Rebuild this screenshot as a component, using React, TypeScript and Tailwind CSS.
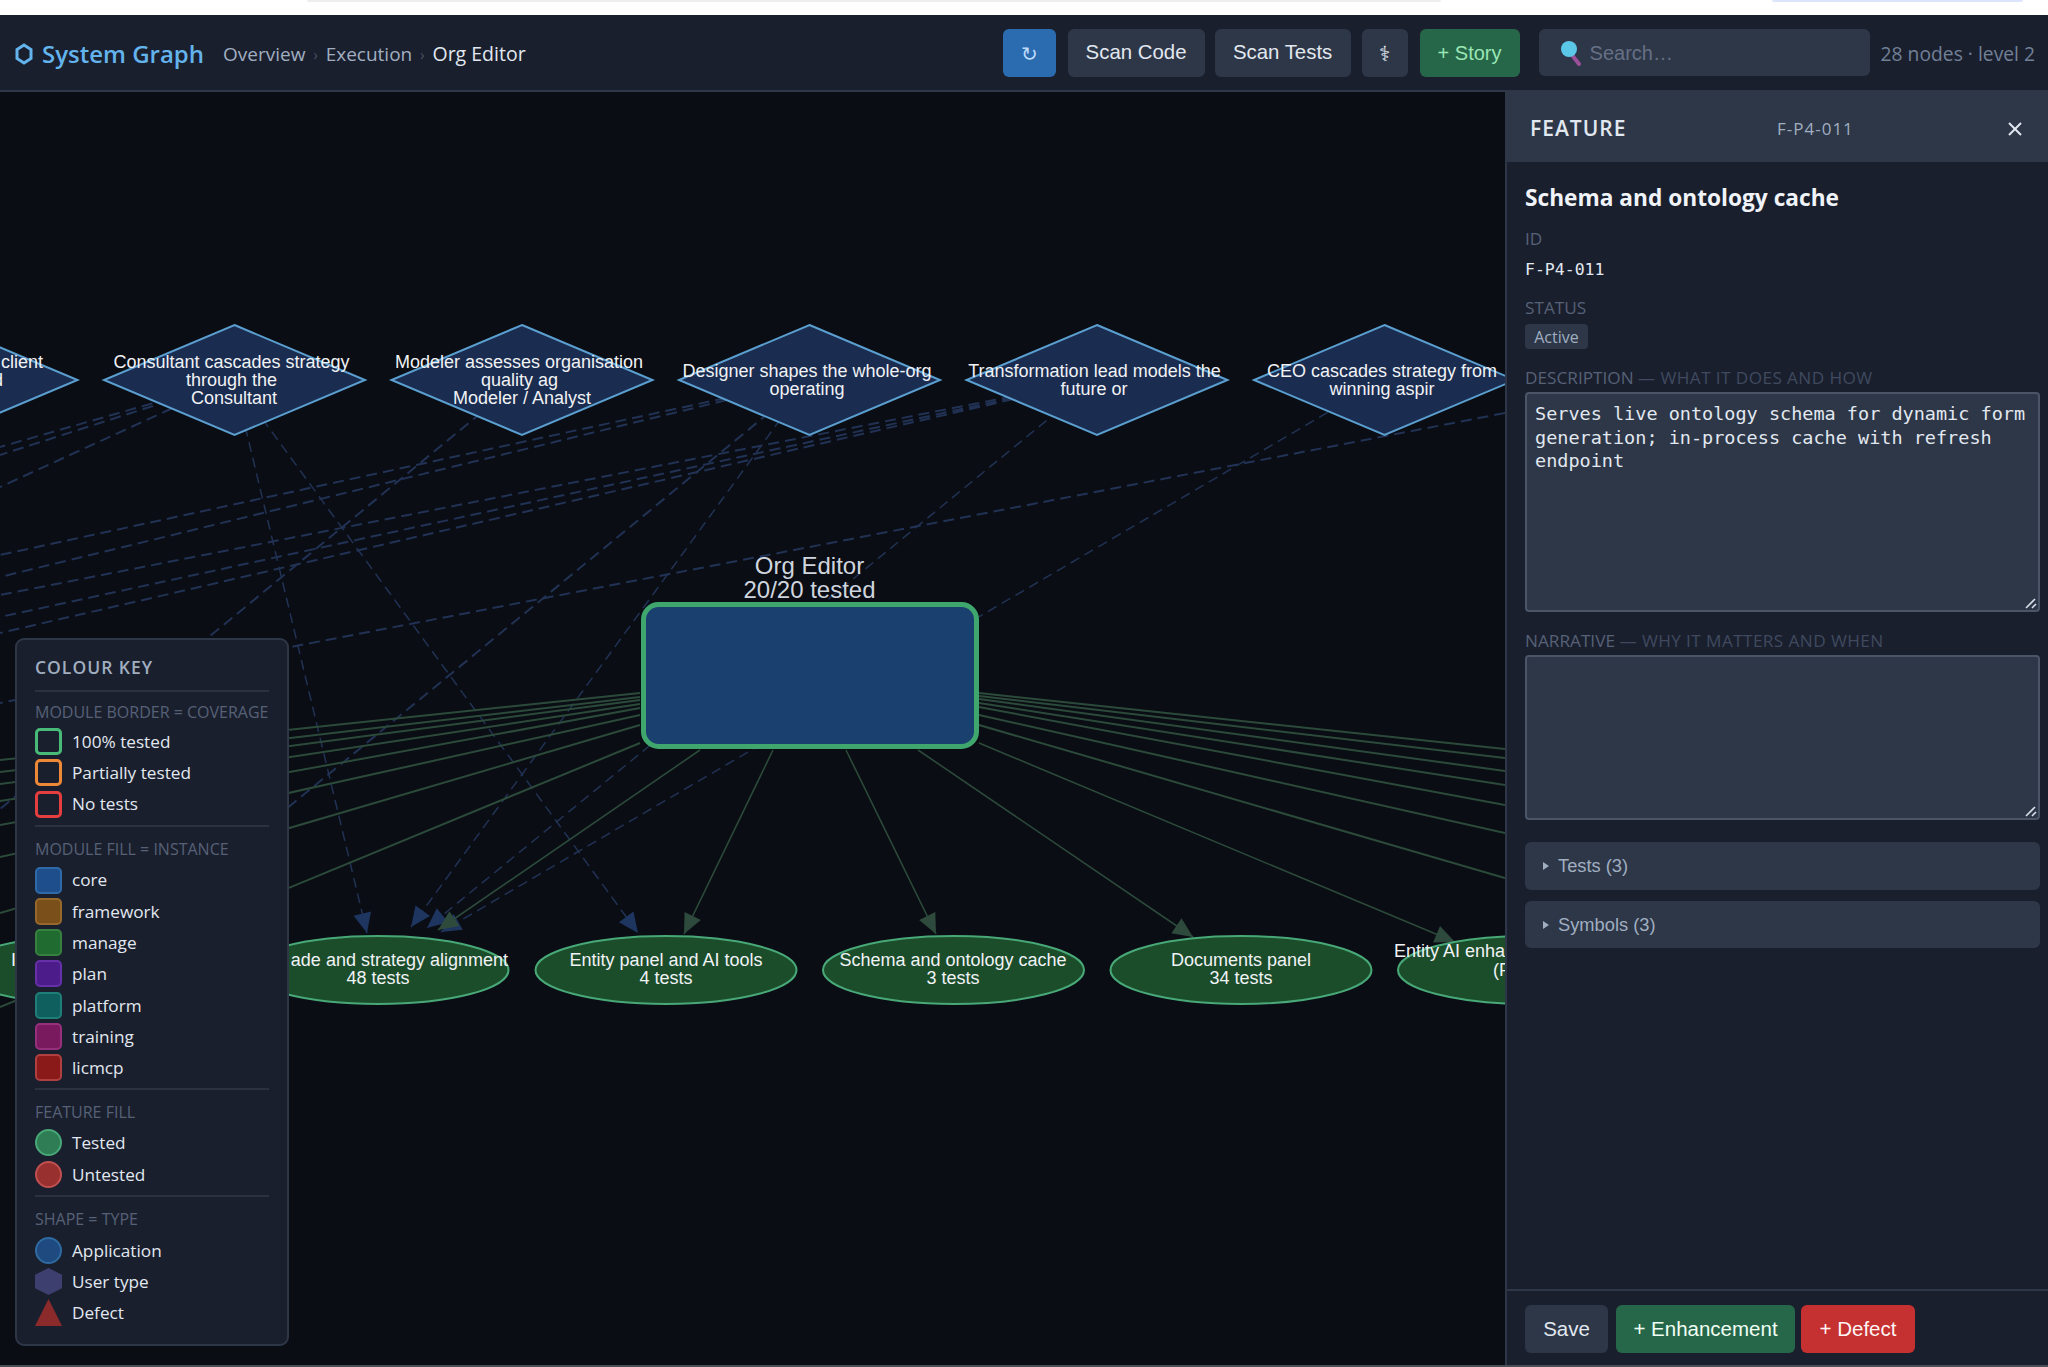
const GREEN = "#2c4a3a";
const BLUE = "#213254";

const greenEdges: [number, number, number, number, boolean][] = [
  [640, 693, 0, 760, false],
  [640, 697, 0, 772, false],
  [640, 700, 0, 784, false],
  [640, 704, 0, 801, false],
  [640, 708, 0, 825, false],
  [640, 715, 0, 857, false],
  [640, 725, 0, 913, false],
  [640, 743, 0, 1007, false],
  [979, 693, 1505, 749, false],
  [979, 696, 1505, 758, false],
  [979, 699, 1505, 771, false],
  [979, 703, 1505, 785, false],
  [979, 707, 1505, 805, false],
  [979, 715, 1505, 833, false],
  [979, 725, 1505, 878, false],
  [979, 743, 1455, 942, true],
  [918, 750, 1193, 937, true],
  [846, 750, 936, 934, true],
  [773, 750, 684, 934, true],
  [700, 750, 438, 930, true],
];

const blueEdges: [number, number, number, number, boolean][] = [
  [234, 380, 367, 933, true],
  [234, 380, 638, 933, true],
  [234, 380, 0, 447, false],
  [234, 380, 0, 455, false],
  [234, 380, 0, 487, false],
  [521, 380, 0, 809, false],
  [809, 380, 0, 555, false],
  [809, 380, 0, 577, false],
  [809, 380, 411, 927, true],
  [809, 380, 90, 970, false],
  [1096, 380, 427, 928, true],
  [1096, 380, 0, 595, false],
  [1096, 380, 0, 617, false],
  [1096, 380, 0, 633, false],
  [1383, 380, 441, 932, true],
  [1505, 413, 0, 703, false],
];

function arrow(x1: number, y1: number, x2: number, y2: number) {
  const d = Math.hypot(x2 - x1, y2 - y1);
  const ux = (x2 - x1) / d;
  const uy = (y2 - y1) / d;
  const bx = x2 - ux * 20;
  const by = y2 - uy * 20;
  return `${x2},${y2} ${bx - uy * 9},${by + ux * 9} ${bx + uy * 9},${by - ux * 9}`;
}

const diamonds: { cx: number; lines: [string, number, number][] }[] = [
  { cx: -53, lines: [["client", 43, 362], ["d", 3, 380]] },
  {
    cx: 234.5,
    lines: [
      ["Consultant cascades strategy", 231.5, 362],
      ["through the", 231.5, 380],
      ["Consultant", 234, 398],
    ],
  },
  {
    cx: 522,
    lines: [
      ["Modeler assesses organisation", 519, 362],
      ["quality ag", 519.5, 380],
      ["Modeler / Analyst", 522, 398],
    ],
  },
  {
    cx: 809.5,
    lines: [
      ["Designer shapes the whole-org", 807, 371],
      ["operating", 807, 389],
    ],
  },
  {
    cx: 1097,
    lines: [
      ["Transformation lead models the", 1094.5, 371],
      ["future or", 1094, 389],
    ],
  },
  {
    cx: 1384.5,
    lines: [
      ["CEO cascades strategy from", 1382, 371],
      ["winning aspir", 1382, 389],
    ],
  },
];

const ellipses: { cx: number; lines: [string, number, number, "start" | "middle" | "end"][] }[] = [
  { cx: 90.5, lines: [["I", 11, 960, "start"]] },
  {
    cx: 378,
    lines: [
      ["ade and strategy alignment", 508, 960, "end"],
      ["48 tests", 378, 978, "middle"],
    ],
  },
  {
    cx: 666,
    lines: [
      ["Entity panel and AI tools", 666, 960, "middle"],
      ["4 tests", 666, 978, "middle"],
    ],
  },
  {
    cx: 953.5,
    lines: [
      ["Schema and ontology cache", 953, 960, "middle"],
      ["3 tests", 953, 978, "middle"],
    ],
  },
  {
    cx: 1241,
    lines: [
      ["Documents panel", 1241, 960, "middle"],
      ["34 tests", 1241, 978, "middle"],
    ],
  },
  {
    cx: 1528.5,
    lines: [
      ["Entity AI enhancement", 1394, 951, "start"],
      ["(F-P4)", 1493, 970, "start"],
    ],
  },
];

function Graph() {
  return (
    <svg
      width="1505"
      height="1273"
      viewBox="0 92 1505 1273"
      className="block"
      fontFamily="'Liberation Sans', Arial, sans-serif"
    >
      {blueEdges.map(([a, b, c, d, head], i) => (
        <g key={i}>
          <line
            x1={a}
            y1={b}
            x2={c}
            y2={d}
            stroke={BLUE}
            strokeWidth={head ? 1.5 : 2}
            strokeDasharray={head ? "10 6" : "11 6"}
          />
          {head && <polygon points={arrow(a, b, c, d)} fill="#1e3560" />}
        </g>
      ))}
      {greenEdges.map(([a, b, c, d, head], i) => (
        <g key={i}>
          <line x1={a} y1={b} x2={c} y2={d} stroke={GREEN} strokeWidth={head ? 1.6 : 2} />
          {head && <polygon points={arrow(a, b, c, d)} fill="#2e4a3c" />}
        </g>
      ))}
      {diamonds.map((n) => (
        <g key={n.cx}>
          <polygon
            points={`${n.cx},325 ${n.cx + 130.5},380 ${n.cx},435 ${n.cx - 130.5},380`}
            fill="#1a2c4f"
            stroke="#5b9fd0"
            strokeWidth="2"
          />
        </g>
      ))}
      {diamonds.map((n) =>
        n.lines.map(([t, x, y]) => (
          <text
            key={t}
            x={x}
            y={y + 6}
            fontSize="18"
            fill="#f0f2f5"
            textAnchor={n.cx < 0 ? "end" : "middle"}
          >
            {t}
          </text>
        )),
      )}
      <rect x="643.5" y="604.5" width="333" height="142" rx="15" fill="#1a4070" stroke="#3fa66e" strokeWidth="5" />
      <text x="809.5" y="574" fontSize="24" fill="#cfd5de" textAnchor="middle">
        Org Editor
      </text>
      <text x="809.5" y="598" fontSize="24" fill="#cfd5de" textAnchor="middle">
        20/20 tested
      </text>
      {ellipses.map((n) => (
        <ellipse key={n.cx} cx={n.cx} cy="970" rx="130.5" ry="34" fill="#1b4d2b" stroke="#48a878" strokeWidth="2" />
      ))}
      {ellipses.map((n) =>
        n.lines.map(([t, x, y, anchor]) => (
          <text key={t} x={x} y={y + 6} fontSize="18" fill="#f0f2f5" textAnchor={anchor}>
            {t}
          </text>
        )),
      )}
    </svg>
  );
}

function Swatch({ border, fill }: { border: string; fill: string }) {
  return <span className={`h-[27px] w-[27px] shrink-0 rounded-[5px] ${border} ${fill}`} />;
}

function LegendRow({ icon, label }: { icon: React.ReactNode; label: string }) {
  return (
    <div className="mb-[4.3px] flex h-[27px] items-center gap-[10px]">
      {icon}
      <span className="text-[17.2px] leading-none text-[#e2e8f0]">{label}</span>
    </div>
  );
}

function LegendHeading({ children, gap }: { children: React.ReactNode; gap: string }) {
  return <div className={`h-[20px] whitespace-nowrap text-[16px] leading-[20px] text-[#566176] ${gap}`}>{children}</div>;
}

function Divider() {
  return <div className="mb-[12px] mt-[7px] h-[2px] bg-[#2a3242]" />;
}

function Legend() {
  return (
    <div className="absolute left-[15px] top-[546px] h-[708px] w-[274px] rounded-[9px] border-2 border-[#2d3748] bg-[#1a1f2e] px-[18px] pt-[15px]">
      <div className="mb-[11px] text-[17.5px] font-semibold leading-[24px] tracking-[1px] text-[#a0aec0]">COLOUR KEY</div>
      <div className="mb-[10px] h-[2px] bg-[#2a3242]" />
      <LegendHeading gap="mb-[6px]">MODULE BORDER = COVERAGE</LegendHeading>
      <LegendRow label="100% tested" icon={<Swatch border="border-[3px] border-[#48bb78]" fill="bg-[#1a1f2e]" />} />
      <LegendRow label="Partially tested" icon={<Swatch border="border-[3px] border-[#ed8936]" fill="bg-[#1a1f2e]" />} />
      <LegendRow label="No tests" icon={<Swatch border="border-[3px] border-[#e53e3e]" fill="bg-[#1a1f2e]" />} />
      <Divider />
      <LegendHeading gap="mb-[8px]">MODULE FILL = INSTANCE</LegendHeading>
      <LegendRow label="core" icon={<Swatch border="border-2 border-[#2f6aa8]" fill="bg-[#1e4e8c]" />} />
      <LegendRow label="framework" icon={<Swatch border="border-2 border-[#96682c]" fill="bg-[#7b4f1a]" />} />
      <LegendRow label="manage" icon={<Swatch border="border-2 border-[#38803f]" fill="bg-[#1f6b30]" />} />
      <LegendRow label="plan" icon={<Swatch border="border-2 border-[#6530a8]" fill="bg-[#4c1d8a]" />} />
      <LegendRow label="platform" icon={<Swatch border="border-2 border-[#1f7f78]" fill="bg-[#0f5f5f]" />} />
      <LegendRow label="training" icon={<Swatch border="border-2 border-[#97307c]" fill="bg-[#7a1a5e]" />} />
      <LegendRow label="licmcp" icon={<Swatch border="border-2 border-[#b04040]" fill="bg-[#8a1a1a]" />} />
      <Divider />
      <LegendHeading gap="mb-[7px]">FEATURE FILL</LegendHeading>
      <LegendRow
        label="Tested"
        icon={<span className="h-[27px] w-[27px] shrink-0 rounded-full border-2 border-[#48a878] bg-[#2f7d55]" />}
      />
      <LegendRow
        label="Untested"
        icon={<span className="h-[27px] w-[27px] shrink-0 rounded-full border-2 border-[#c05050] bg-[#983030]" />}
      />
      <Divider />
      <LegendHeading gap="mb-[8px]">SHAPE = TYPE</LegendHeading>
      <LegendRow
        label="Application"
        icon={<span className="h-[27px] w-[27px] shrink-0 rounded-full border-2 border-[#2f6aa0] bg-[#1e4a80]" />}
      />
      <LegendRow
        label="User type"
        icon={
          <svg width="27" height="27" viewBox="0 0 27 27" className="shrink-0">
            <polygon points="13.5,0 27,6.75 27,20.25 13.5,27 0,20.25 0,6.75" fill="#3d3f6e" />
          </svg>
        }
      />
      <LegendRow
        label="Defect"
        icon={
          <svg width="27" height="27" viewBox="0 0 27 27" className="shrink-0">
            <polygon points="13.5,0 27,27 0,27" fill="#8b2a2a" />
          </svg>
        }
      />
    </div>
  );
}

function ToolButton({ className, children }: { className: string; children: React.ReactNode }) {
  return (
    <button className={`flex h-[48px] items-center justify-center rounded-[6px] font-['Liberation_Sans',sans-serif] ${className}`}>
      {children}
    </button>
  );
}

function Field({ label, hint }: { label: string; hint: string }) {
  return (
    <div className="whitespace-nowrap text-[17.2px] leading-[20px] text-[#566176]">
      {label} <span className="tracking-[0.4px] text-[#3f4a5e]">— {hint}</span>
    </div>
  );
}

function Disclosure({ label, className }: { label: string; className: string }) {
  return (
    <div className={`flex items-center rounded-[6px] bg-[#2d3748] pl-[18px] font-['Liberation_Sans',sans-serif] text-[18.3px] text-[#a0aec0] ${className}`}>
      <span className="mr-[9px] h-0 w-0 border-y-[4px] border-l-[6px] border-y-transparent border-l-[#a0aec0]" />
      {label}
    </div>
  );
}

function Grip() {
  return (
    <svg width="12" height="12" viewBox="0 0 12 12" className="pointer-events-none absolute bottom-[3px] right-[3px]" stroke="#d8dee8" strokeWidth="1.6" fill="none">
      <line x1="1" y1="11" x2="10" y2="2" />
      <line x1="7" y1="11" x2="11" y2="7" />
    </svg>
  );
}

export default function App() {
  return (
    <div className="flex h-[1367px] w-[2048px] flex-col overflow-hidden bg-white font-['Open_Sans',sans-serif]">
      <div className="flex h-[15px] shrink-0 items-start">
        <div className="ml-[307px] h-[2px] w-[1134px] rounded-b bg-[#eceef0]" />
        <div className="ml-[331px] h-[2px] w-[251px] rounded-b bg-[#dbe5fb]" />
      </div>

      <header className="flex h-[77px] shrink-0 items-center border-b-2 border-[#2d3748] bg-[#1a1f2e] pl-[15px] pr-[13px]">
        <div className="flex items-center pt-[3px]">
          <svg width="18" height="22" viewBox="0 0 18 22" className="mr-[9px]" fill="none" stroke="#63b3ed" strokeWidth="3">
            <polygon points="9,2 16,6.5 16,15.5 9,20 2,15.5 2,6.5" />
          </svg>
          <span className="text-[24px] font-semibold text-[#63b3ed]">System Graph</span>
          <nav className="ml-[19px] flex items-center text-[19px] text-[#a0aec0]">
            <span>Overview</span>
            <span className="mx-[8px] text-[14px] text-[#4a5568]">›</span>
            <span>Execution</span>
            <span className="mx-[8px] text-[14px] text-[#4a5568]">›</span>
            <span className="text-[19.5px] text-[#e2e8f0]">Org Editor</span>
          </nav>
        </div>
        <div className="ml-auto flex items-center">
          <ToolButton className="w-[53px] bg-[#2b6cb0] pt-[2px] font-['DejaVu_Sans',sans-serif] text-[20px] text-[#bfdbfe]">↻</ToolButton>
          <ToolButton className="ml-[12px] w-[137px] bg-[#2d3748] text-[20.4px] text-[#e2e8f0]">Scan Code</ToolButton>
          <ToolButton className="ml-[10px] w-[136px] bg-[#2d3748] text-[20.4px] text-[#e2e8f0]">Scan Tests</ToolButton>
          <ToolButton className="ml-[11px] w-[46px] bg-[#2d3748] pt-[3px] font-['DejaVu_Sans',sans-serif] text-[21px] text-[#e2e8f0]">⚕</ToolButton>
          <ToolButton className="ml-[12px] w-[100px] bg-[#276749] text-[20px] text-[#9ae6b4]">+ Story</ToolButton>
          <div className="ml-[19px] flex h-[47px] w-[331px] items-center rounded-[6px] bg-[#2d3748] pl-[21px] pt-[1px] font-['Liberation_Sans',sans-serif] text-[20px] text-[#667085]">
            <svg width="22" height="26" viewBox="0 0 22 26" className="mr-[8px]">
              <line x1="12" y1="15" x2="19" y2="24" stroke="#9b4f96" strokeWidth="4" strokeLinecap="round" />
              <circle cx="9" cy="9" r="8" fill="#5cc8e8" />
            </svg>
            Search…
          </div>
          <span className="ml-[11px] whitespace-nowrap pt-[3px] text-[19.3px] text-[#718096]">28 nodes · level 2</span>
        </div>
      </header>

      <main className="flex min-h-0 flex-1">
        <section className="relative w-[1505px] shrink-0 overflow-hidden bg-[#0a0d14]">
          <Graph />
          <Legend />
        </section>

        <aside className="-mt-[2px] flex w-[543px] shrink-0 flex-col border-l-2 border-[#2d3748] bg-[#1a1f2e]">
          <div className="flex h-[72px] shrink-0 items-center bg-[#2d3748] pl-[23px] pr-[25px] pt-[5px]">
            <span className="w-[94px] whitespace-nowrap text-[21px] font-semibold tracking-[1px] text-[#e2e8f0]">FEATURE</span>
            <span className="ml-[153px] text-[17px] tracking-[1px] text-[#a0aec0]">F-P4-011</span>
            <svg width="16" height="16" viewBox="0 0 16 16" stroke="#e2e8f0" strokeWidth="2" className="ml-auto">
              <line x1="2" y1="2" x2="14" y2="14" />
              <line x1="14" y1="2" x2="2" y2="14" />
            </svg>
          </div>

          <div className="flex flex-1 flex-col pl-[18px] pr-[8px]">
            <h2 className="mt-[20px] text-[22.7px] font-bold leading-[32px] text-[#f0f3f7]">Schema and ontology cache</h2>
            <div className="mt-[15px] text-[17.2px] leading-[20px] text-[#566176]">ID</div>
            <div className="mt-[11px] font-['DejaVu_Sans_Mono',monospace] text-[16.5px] leading-[20px] text-[#e2e8f0]">F-P4-011</div>
            <div className="mt-[18px] text-[17.2px] leading-[20px] text-[#566176]">STATUS</div>
            <div className="mt-[6px] flex h-[25px] w-[63px] items-center justify-center rounded-[4px] bg-[#2d3748] text-[16px] text-[#a0aec0]">Active</div>
            <div className="mt-[19px]">
              <Field label="DESCRIPTION" hint="WHAT IT DOES AND HOW" />
            </div>
            <div className="relative mt-[4px] h-[220px] shrink-0">
              <textarea
                readOnly
                defaultValue="Serves live ontology schema for dynamic form generation; in-process cache with refresh endpoint"
                className="block h-full w-full resize-none rounded-[4px] border-2 border-[#4a5568] bg-[#2d3748] px-[8px] py-[8px] font-['DejaVu_Sans_Mono',monospace] text-[18.5px] leading-[23.7px] text-[#e2e8f0] outline-none"
              />
              <Grip />
            </div>
            <div className="mt-[19px]">
              <Field label="NARRATIVE" hint="WHY IT MATTERS AND WHEN" />
            </div>
            <div className="relative mt-[4px] h-[165px] shrink-0">
              <textarea
                readOnly
                defaultValue=""
                className="block h-full w-full resize-none rounded-[4px] border-2 border-[#4a5568] bg-[#2d3748] outline-none"
              />
              <Grip />
            </div>
            <Disclosure label="Tests (3)" className="mt-[22px] h-[48px]" />
            <Disclosure label="Symbols (3)" className="mt-[11px] h-[47px]" />
          </div>

          <div className="flex h-[76px] shrink-0 items-start gap-[8px] border-t-2 border-[#2d3748] pl-[18px] pt-[14px] font-['Liberation_Sans',sans-serif] text-[20.5px]">
            <button className="h-[48px] w-[83px] rounded-[6px] bg-[#2d3748] text-[#e2e8f0]">Save</button>
            <button className="h-[48px] w-[179px] rounded-[6px] bg-[#276749] text-[#f0fff4]">+ Enhancement</button>
            <button className="-ml-[2px] h-[48px] w-[114px] rounded-[6px] bg-[#c53030] text-[#fff5f5]">+ Defect</button>
          </div>
        </aside>
      </main>
      <div className="h-[2px] shrink-0 bg-[#4a4f55]" />
    </div>
  );
}
